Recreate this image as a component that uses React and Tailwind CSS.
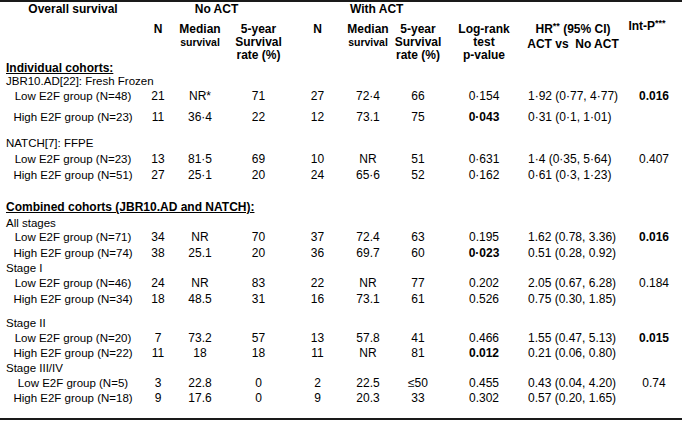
const cols =
  'grid grid-cols-[146px_24px_60px_57px_61px_40px_60px_72px_106px_56px] w-[682px]';

const rows = [
  { kind: 'head', text: 'Individual cohorts:', cls: 'h-[12px] leading-[12px]' },
  { kind: 'sub', text: 'JBR10.AD[22]: Fresh Frozen', cls: 'h-[14px]' },
  { kind: 'data', label: 'Low E2F group (N=48)', cls: 'h-[14px] mt-[1px]', v: ['21', 'NR*', '71', '27', '72·4', '66', '0·154', '1·92 (0·77, 4·77)', '0.016'], b: [8] },
  { kind: 'data', label: 'High E2F group (N=23)', cls: 'h-[14px] mt-[7px]', v: ['11', '36·4', '22', '12', '73.1', '75', '0·043', '0·31 (0·1, 1·01)', ''], b: [6] },
  { kind: 'sub', text: 'NATCH[7]: FFPE', cls: 'h-[14px] mt-[12px]' },
  { kind: 'data', label: 'Low E2F group (N=23)', cls: 'h-[14px] mt-[2px]', v: ['13', '81·5', '69', '10', 'NR', '51', '0·631', '1·4 (0·35, 5·64)', '0.407'], b: [] },
  { kind: 'data', label: 'High E2F group (N=51)', cls: 'h-[14px] mt-[2px]', v: ['27', '25·1', '20', '24', '65·6', '52', '0·162', '0·61 (0·3, 1·23)', ''], b: [] },
  { kind: 'head', text: 'Combined cohorts (JBR10.AD and NATCH):', cls: 'h-[14px] mt-[18px]' },
  { kind: 'sub', text: 'All stages', cls: 'h-[14px] mt-[2px]' },
  { kind: 'data', label: 'Low E2F group (N=71)', cls: 'h-[14px]', v: ['34', 'NR', '70', '37', '72.4', '63', '0.195', '1.62 (0.78, 3.36)', '0.016'], b: [8] },
  { kind: 'data', label: 'High E2F group (N=74)', cls: 'h-[14px] mt-[2px]', v: ['38', '25.1', '20', '36', '69.7', '60', '0·023', '0.51 (0.28, 0.92)', ''], b: [6] },
  { kind: 'sub', text: 'Stage I', cls: 'h-[14px] mt-[1px]' },
  { kind: 'data', label: 'Low E2F group (N=46)', cls: 'h-[14px] mt-[1px]', v: ['24', 'NR', '83', '22', 'NR', '77', '0.202', '2.05 (0.67, 6.28)', '0.184'], b: [] },
  { kind: 'data', label: 'High E2F group (N=34)', cls: 'h-[14px] mt-[2px]', v: ['18', '48.5', '31', '16', '73.1', '61', '0.526', '0.75 (0.30, 1.85)', ''], b: [] },
  { kind: 'sub', text: 'Stage II', cls: 'h-[14px] mt-[10px]' },
  { kind: 'data', label: 'Low E2F group (N=20)', cls: 'h-[14px] mt-[1px]', v: ['7', '73.2', '57', '13', '57.8', '41', '0.466', '1.55 (0.47, 5.13)', '0.015'], b: [8] },
  { kind: 'data', label: 'High E2F group (N=22)', cls: 'h-[14px] mt-[1px]', v: ['11', '18', '18', '11', 'NR', '81', '0.012', '0.21 (0.06, 0.80)', ''], b: [6] },
  { kind: 'sub', text: 'Stage III/IV', cls: 'h-[14px] mt-[1px]' },
  { kind: 'data', label: 'Low E2F group (N=5)', cls: 'h-[14px] mt-[1px]', v: ['3', '22.8', '0', '2', '22.5', '≤50', '0.455', '0.43 (0.04, 4.20)', '0.74'], b: [] },
  { kind: 'data', label: 'High E2F group (N=18)', cls: 'h-[14px] mt-[1px]', v: ['9', '17.6', '0', '9', '20.3', '33', '0.302', '0.57 (0.20, 1.65)', ''], b: [] },
];

function DataRow({ row }) {
  return (
    <div className={`${cols} ${row.cls} items-center leading-[14px]`}>
      <div className="text-center text-[11.5px]">{row.label}</div>
      {row.v.map((val, i) => (
        <div
          key={i}
          className={`text-[12px] whitespace-nowrap ${i === 7 ? 'text-left pl-[8px]' : 'text-center'} ${
            row.b.includes(i) ? 'font-bold' : ''
          }`}
        >
          {val}
        </div>
      ))}
    </div>
  );
}

export default function App() {
  return (
    <div
      className="w-[700px] h-[423px] bg-white text-black overflow-hidden"
      style={{ fontFamily: '"Liberation Sans", Arial, sans-serif' }}
    >
      <div className="w-[682px] border-t-2 border-[#1a1a1a]">
        {/* top header */}
        <div className="flex h-[14px] leading-[14px] text-[12px] font-bold">
          <div className="w-[146px] text-center">Overall survival</div>
          <div className="w-[141px] text-center">No ACT</div>
          <div className="pl-[63px]">With ACT</div>
        </div>
        <div className={`${cols} mt-[7px] h-[39px] items-start font-bold text-[12px] leading-[13px]`}>
          <div />
          <div className="text-center">N</div>
          <div className="text-center">
            Median
            <div className="text-[10.5px]">survival</div>
          </div>
          <div className="text-center">
            5-year
            <br />
            Survival
            <br />
            rate (%)
          </div>
          <div className="text-center">N</div>
          <div className="text-center whitespace-nowrap -mx-[6px]">
            Median
            <div className="text-[10.5px]">survival</div>
          </div>
          <div className="text-center">
            5-year
            <br />
            Survival
            <br />
            rate (%)
          </div>
          <div className="text-center">
            Log-rank
            <br />
            test
            <br />
            p-value
          </div>
          <div className="text-center leading-[15px] -mt-[1px] whitespace-nowrap">
            HR<sup className="text-[9px]">**</sup> (95% CI)
            <br />
            ACT vs&nbsp; No ACT
          </div>
          <div className="text-center pr-[14px] -mt-[3px]">
            Int-P<sup className="text-[9px]">***</sup>
          </div>
        </div>

        {rows.map((row, i) => {
          if (row.kind === 'head')
            return (
              <div key={i} className={`${row.cls} flex items-center pl-[6px] text-[12px] font-bold underline`}>
                {row.text}
              </div>
            );
          if (row.kind === 'sub')
            return (
              <div key={i} className={`${row.cls} flex items-center pl-[6px] text-[11.5px] leading-[14px]`}>
                {row.text}
              </div>
            );
          return <DataRow key={i} row={row} />;
        })}

        <div className="mt-[13px] border-t-2 border-[#1a1a1a]" />
      </div>
    </div>
  );
}
